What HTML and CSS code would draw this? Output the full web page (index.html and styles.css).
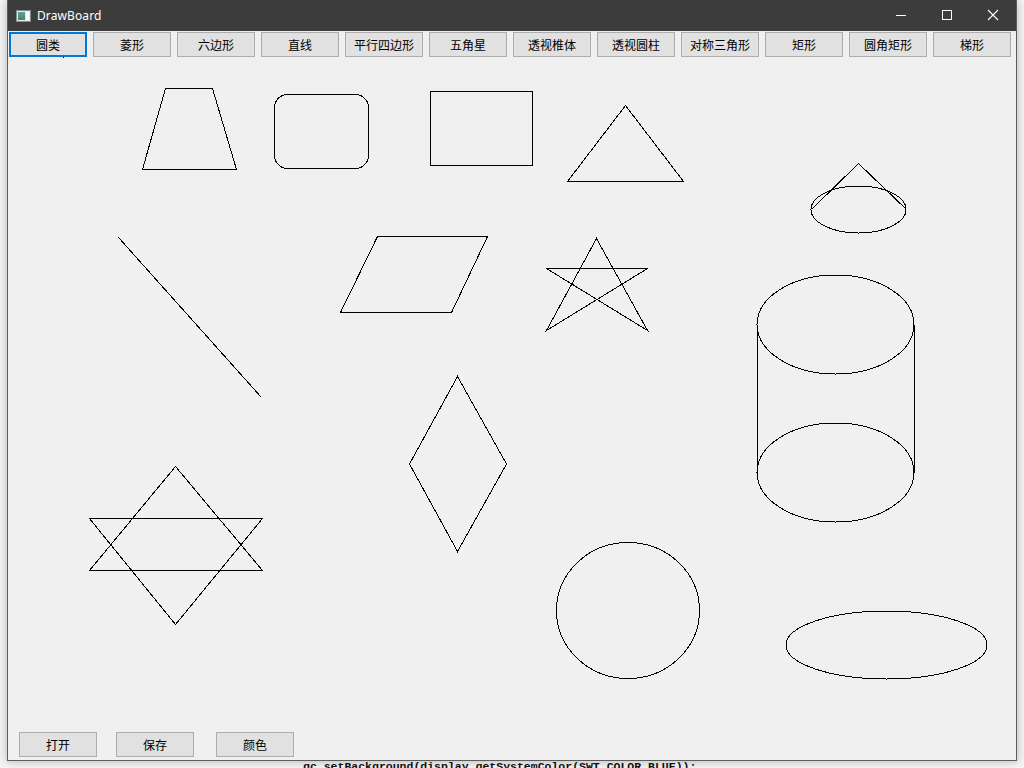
FILE: index.html
```html
<!DOCTYPE html>
<html lang="zh">
<head>
<meta charset="utf-8">
<title>DrawBoard</title>
<link rel="stylesheet" href="styles.css">
</head>
<body>
<div class="desktop">
  <div class="behind-code">gc.setBackground(display.getSystemColor(SWT.COLOR_BLUE));</div>
  <div class="window">
    <div class="titlebar">
      <svg class="app-icon" width="15" height="12" viewBox="0 0 15 12">
        <defs>
          <linearGradient id="ig" x1="0" y1="0" x2="0" y2="1">
            <stop offset="0" stop-color="#5aa0a8"/>
            <stop offset="1" stop-color="#3f8a5c"/>
          </linearGradient>
        </defs>
        <rect x="0.5" y="0.5" width="14" height="11" fill="#e8e8e8" stroke="#8c8c8c"/>
        <rect x="2" y="2" width="7" height="8" fill="url(#ig)"/>
        <rect x="10" y="2" width="3" height="8" fill="#ffffff"/>
      </svg>
      <span class="title">DrawBoard</span>
      <div class="controls">
        <div class="ctl">
          <svg width="12" height="12" viewBox="0 0 12 12"><line x1="1" y1="6.5" x2="11" y2="6.5" stroke="#fff" stroke-width="1"/></svg>
        </div>
        <div class="ctl">
          <svg width="12" height="12" viewBox="0 0 12 12"><rect x="1.5" y="1.5" width="9" height="9" fill="none" stroke="#fff" stroke-width="1"/></svg>
        </div>
        <div class="ctl">
          <svg width="12" height="12" viewBox="0 0 12 12"><path d="M1 1 L11 11 M11 1 L1 11" stroke="#fff" stroke-width="1.1" fill="none"/></svg>
        </div>
      </div>
    </div>
    <div class="client">
      <div class="toolbar">
        <button class="btn focused">圆类</button>
        <button class="btn">菱形</button>
        <button class="btn">六边形</button>
        <button class="btn">直线</button>
        <button class="btn">平行四边形</button>
        <button class="btn">五角星</button>
        <button class="btn">透视椎体</button>
        <button class="btn">透视圆柱</button>
        <button class="btn">对称三角形</button>
        <button class="btn">矩形</button>
        <button class="btn">圆角矩形</button>
        <button class="btn">梯形</button>
      </div>
      <svg class="canvas" width="1008" height="675" viewBox="8 57 1008 675" shape-rendering="crispEdges">
        <g fill="none" stroke="#000" stroke-width="1">
          <rect x="63" y="57" width="1" height="1" fill="#000" stroke="none"/>
          <polygon points="165.5,88.5 212.5,88.5 236.5,169.5 142.5,169.5"/>
          <rect x="274.5" y="94.5" width="94" height="74" rx="13" ry="13"/>
          <rect x="430.5" y="91.5" width="102" height="74"/>
          <polygon points="625.5,105.5 683.5,181.5 567.5,181.5"/>
          <ellipse cx="858.5" cy="209.5" rx="47.5" ry="23.5"/>
          <polyline points="811.5,209.5 858.5,163.5 906.5,209.5"/>
          <line x1="118.5" y1="237.5" x2="261.5" y2="397.5"/>
          <polygon points="377.5,236.5 487.5,236.5 451.5,312.5 340.5,312.5"/>
          <polygon points="596.5,238.5 647.5,330.5 546.5,268.5 647.5,268.5 546.5,330.5"/>
          <ellipse cx="835.5" cy="324.5" rx="78.5" ry="49.5"/>
          <ellipse cx="835.5" cy="472.5" rx="78.5" ry="49.5"/>
          <line x1="757" y1="324.5" x2="757" y2="472.5"/>
          <line x1="914" y1="324.5" x2="914" y2="472.5"/>
          <polygon points="175.5,466.5 262.5,570.5 89.5,570.5"/>
          <polygon points="175.5,624.5 89.5,518.5 262.5,518.5"/>
          <polygon points="457.5,376.5 506.5,464 457.5,551.5 409.5,464"/>
          <ellipse cx="628" cy="610.5" rx="71.5" ry="68"/>
          <ellipse cx="886.5" cy="645" rx="100.5" ry="34"/>
        </g>
      </svg>
      <div class="bottombar">
        <button class="btn">打开</button>
        <button class="btn">保存</button>
        <button class="btn wide-gap">颜色</button>
      </div>
    </div>
  </div>
</div>
</body>
</html>
```

FILE: styles.css
```css
html, body {
  margin: 0;
  padding: 0;
}

body {
  width: 1024px;
  height: 768px;
  overflow: hidden;
  background: #f3f3f3;
  font-family: "Noto Sans", "Noto Sans CJK SC", sans-serif;
}

.desktop {
  position: relative;
  width: 1024px;
  height: 768px;
  overflow: hidden;
  background: #f4f4f4;
}

.behind-code {
  position: absolute;
  left: 303px;
  top: 760px;
  font-family: "Liberation Mono", monospace;
  font-size: 11.5px;
  line-height: 14px;
  font-weight: bold;
  color: #111;
  white-space: nowrap;
  z-index: 0;
}

.window {
  position: relative;
  z-index: 1;
  margin-left: 7px;
  width: 1010px;
  height: 761px;
  box-sizing: border-box;
  border: 1px solid #5c5c5c;
  border-top: 0;
  background: #f0f0f0;
  box-shadow: 0 0 9px rgba(0, 0, 0, 0.28);
  display: flex;
  flex-direction: column;
}

.titlebar {
  height: 31px;
  flex: none;
  background: #3c3c3c;
  display: flex;
  align-items: center;
  color: #fff;
}

.app-icon {
  margin-left: 8px;
  margin-top: 1px;
  flex: none;
}

.title {
  margin-left: 6px;
  font-family: "Noto Sans", "Open Sans", sans-serif;
  font-size: 12px;
  color: #ffffff;
  letter-spacing: 0.1px;
}

.controls {
  margin-left: auto;
  display: flex;
  height: 31px;
}

.ctl {
  width: 46px;
  height: 31px;
  display: flex;
  align-items: center;
  justify-content: center;
}

.ctl svg {
  margin-top: -1px;
}

.client {
  flex: 1;
  display: flex;
  flex-direction: column;
  background: #f0f0f0;
}

.toolbar {
  height: 26px;
  box-sizing: border-box;
  padding: 1px 0 0 1px;
  display: flex;
  gap: 6px;
}

.btn {
  width: 78px;
  height: 25px;
  box-sizing: border-box;
  margin: 0;
  padding: 0;
  background: #e1e1e1;
  border: 1px solid #adadad;
  border-radius: 0;
  font-family: "Noto Sans CJK SC", "Noto Sans", sans-serif;
  font-size: 12px;
  line-height: 23px;
  color: #000;
  text-align: center;
  flex: none;
}

.btn.focused {
  border: 2px solid #0078d7;
  line-height: 21px;
}

.canvas {
  display: block;
  width: 1008px;
  height: 675px;
  flex: none;
}

.bottombar {
  height: 28px;
  box-sizing: border-box;
  padding: 0 0 3px 11px;
  display: flex;
  gap: 19px;
}

.btn.wide-gap {
  margin-left: 3px;
}
```
